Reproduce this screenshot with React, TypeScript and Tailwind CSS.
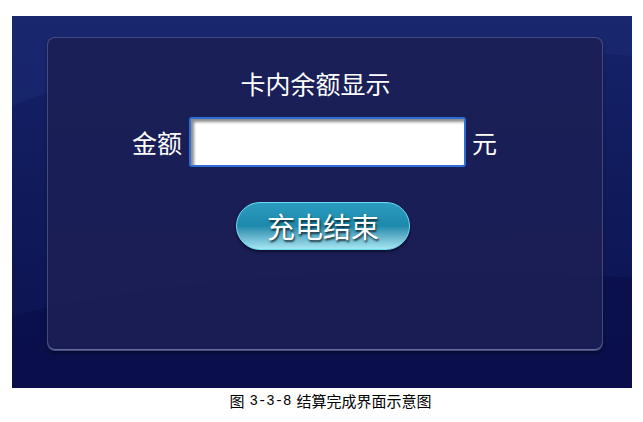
import React from "react";

const cjk = { fontFamily: '"Noto Sans CJK SC", "Noto Sans", sans-serif' };

export default function App() {
  return (
    <div className="w-[643px] h-[422px] bg-white" style={cjk}>
      <div className="pt-[16px] pl-[12px]">
        <div className="relative w-[620px] h-[372px] overflow-hidden bg-gradient-to-b from-[#15236a] via-[#101a5a] to-[#0b1150]">
          <svg className="absolute inset-0" width="620" height="372" viewBox="0 0 620 372">
            <path d="M0 90 C 120 40, 320 20, 620 40 L 620 0 L 0 0 Z" fill="#1a2a72" opacity="0.6" />
            <path d="M0 300 C 200 250, 420 250, 620 262 L 620 372 L 0 372 Z" fill="#0a0e48" opacity="0.7" />
          </svg>
          <div className="relative pt-[21px] pl-[35px]">
            <div className="w-[556px] h-[314px] rounded-[8px] border border-[#5a6090]/70 bg-[#1c1f55]/90 shadow-[0_2px_3px_rgba(0,0,0,0.4),inset_0_-1px_0_rgba(180,190,230,0.5)] flex flex-col items-center pt-[29px]">
              <div className="pr-[19px] text-[25px] leading-[32px] text-white">卡内余额显示</div>
              <div className="mt-[18px] pr-[21px] flex items-center">
                <span className="text-[25px] leading-[30px] text-white mr-[7px]">金额</span>
                <div className="w-[277px] h-[50px] rounded-[3px] border-2 border-[#2f6fd4] bg-white shadow-[inset_3px_3px_3px_rgba(0,0,0,0.45)]" />
                <span className="text-[25px] leading-[30px] text-white ml-[6px]">元</span>
              </div>
              <div className="mt-[35px] mr-[4px] w-[174px] h-[48px] rounded-full border border-[#6fdcf0] bg-gradient-to-b from-[#2a9cc0] via-[#1d89ab] to-[#a6e6f3] shadow-[0_2px_3px_rgba(0,0,0,0.5)] flex items-center justify-center">
                <span className="text-[28px] leading-[32px] text-white [text-shadow:1px_2px_2px_rgba(0,0,0,0.7)]">充电结束</span>
              </div>
            </div>
          </div>
        </div>
      </div>
      <div className="mt-[4px] pl-[18px] flex justify-center items-center text-[15px] leading-[18px] text-black">
        <span>图</span>
        <span className="mx-[5px] text-[14px] [font-family:'Liberation_Mono',monospace]">3-3-8</span>
        <span>结算完成界面示意图</span>
      </div>
    </div>
  );
}
